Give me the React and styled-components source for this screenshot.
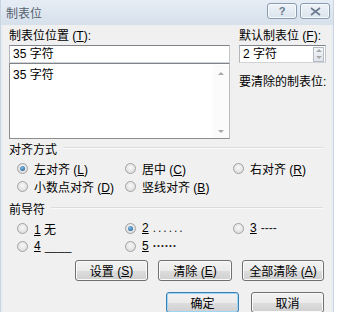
import React from "react";
import styled, { createGlobalStyle } from "styled-components";

const GlobalStyle = createGlobalStyle`
  html, body {
    margin: 0;
    padding: 0;
    background: #ffffff;
  }
  body {
    font-family: "Liberation Sans", "Noto Sans CJK SC", sans-serif;
    font-size: 12px;
    color: #000;
  }
`;

const Window = styled.div`
  width: 334px;
  height: 312px;
  box-sizing: border-box;
  background: #f0f0f0;
  border-left: 1px solid #c9d4e0;
  border-right: 1px solid #c9d4e0;
  display: flex;
  flex-direction: column;
  overflow: hidden;
`;

const TitleBar = styled.div`
  height: 25px;
  flex: none;
  display: flex;
  align-items: center;
  justify-content: space-between;
  padding: 0 3px 0 5px;
  background: linear-gradient(to bottom, #e6edf5, #d6e0eb);
`;

const Title = styled.span`
  color: #55616e;
  font-size: 12px;
`;

const TitleButtons = styled.div`
  display: flex;
  gap: 3px;
  margin-top: -3px;
`;

const CaptionButton = styled.div`
  width: ${p => p.$w}px;
  height: 16px;
  box-sizing: border-box;
  border: 1px solid #8a9bb0;
  border-radius: 3px;
  background: linear-gradient(to bottom, #eef3f8, #dbe4ee);
  box-shadow: inset 0 0 0 1px #f7fafc;
  display: flex;
  align-items: center;
  justify-content: center;
  color: #6b7a8c;
  font-size: 11px;
  font-weight: bold;
`;

const Body = styled.div`
  flex: 1;
  display: flex;
  flex-direction: column;
  padding: 3px 6px 0 6px;
  border-left: 2px solid #e9eef4;
  border-right: 2px solid #e9eef4;
`;

const Top = styled.div`
  display: grid;
  grid-template-columns: 221px 1fr;
  column-gap: 9px;
`;

const Column = styled.div`
  display: flex;
  flex-direction: column;
`;

const Label = styled.div`
  height: 16px;
  line-height: 16px;
  white-space: nowrap;
  margin-top: ${p => p.$mt || 0}px;
`;

const Input = styled.div`
  height: 18px;
  box-sizing: border-box;
  background: #fff;
  border: 1px solid #8c8e92;
  border-color: #7f8288 #c2c5ca #d0d3d7 #b3b6bb;
  padding-left: 3px;
  line-height: 16px;
  margin-top: 1px;
  display: flex;
  align-items: center;
  justify-content: space-between;
`;

const ListBox = styled.div`
  height: 76px;
  box-sizing: border-box;
  background: #fff;
  border: 1px solid #8c8e92;
  border-color: #7f8288 #b9bcc1 #8c8e92 #8c8e92;
  padding: 1px 0 0 3px;
  display: flex;
  justify-content: space-between;
`;

const ScrollBar = styled.div`
  width: 16px;
  display: flex;
  flex-direction: column;
  justify-content: space-between;
  align-items: center;
  padding: 7px 0 5px;
  background: #fbfbfb;
`;

const Arrow = styled.span`
  width: 0;
  height: 0;
  border-left: 3px solid transparent;
  border-right: 3px solid transparent;
  ${p => (p.$down ? "border-top: 3px solid #a8a8a8;" : "border-bottom: 3px solid #a8a8a8;")}
`;

const Spin = styled.div`
  width: 11px;
  height: 15px;
  margin-right: 1px;
  box-sizing: border-box;
  border: 1px solid #b5bcc6;
  background: linear-gradient(to bottom, #f4f6f9, #dfe5ec);
  display: flex;
  flex-direction: column;
  justify-content: space-around;
  align-items: center;
`;

const GroupHeader = styled.div`
  display: flex;
  align-items: center;
  gap: 6px;
  height: 16px;
  margin-top: ${p => p.$mt}px;
  margin-right: 2px;
  &::after {
    content: "";
    flex: 1;
    height: 1px;
    background: #dcdcdc;
    border-bottom: 1px solid #fafafa;
  }
`;

const OptionGrid = styled.div`
  display: grid;
  grid-template-columns: 108px 108px 1fr;
  grid-auto-rows: 18px;
  padding-left: 8px;
  margin-top: 3px;
`;

const Option = styled.div`
  display: flex;
  align-items: center;
  gap: 6px;
  white-space: nowrap;
`;

const Radio = styled.span`
  width: 11px;
  height: 11px;
  flex: none;
  border-radius: 50%;
  box-sizing: border-box;
  border: 1px solid #a2a2a2;
  background: radial-gradient(circle at 50% 40%, #f8f8f8, #d6d6d6);
  display: flex;
  align-items: center;
  justify-content: center;
  &::after {
    content: "";
    width: 5px;
    height: 5px;
    border-radius: 50%;
    background: ${p => (p.$on ? "radial-gradient(circle at 40% 35%, #7fc0ee, #1a4f7f)" : "transparent")};
  }
`;

const Key = styled.u`
  text-underline-offset: 1px;
`;

const Leader = styled.span`
  color: #222;
  letter-spacing: ${p => p.$ls || 0}px;
  font-weight: ${p => (p.$bold ? "bold" : "normal")};
  margin-left: 4px;
`;

const ButtonRow = styled.div`
  display: flex;
  justify-content: flex-end;
  gap: ${p => p.$gap}px;
  margin-top: ${p => p.$mt}px;
  margin-right: 1px;
`;

const Button = styled.div`
  width: ${p => p.$w}px;
  height: 21px;
  box-sizing: border-box;
  border: 1px solid ${p => (p.$default ? "#3c7fb1" : "#707070")};
  border-radius: 3px;
  background: linear-gradient(to bottom, #f2f2f2 0%, #ebebeb 50%, #dddddd 51%, #cfcfcf 100%);
  box-shadow: inset 0 0 0 1px ${p => (p.$default ? "#9fd5f5" : "#fbfbfb")};
  display: flex;
  align-items: center;
  justify-content: center;
  white-space: nowrap;
`;

function AccessLabel({ text, k }) {
  return (
    <>
      {text} (<Key>{k}</Key>)
    </>
  );
}

export default function App() {
  const align = [
    { text: "左对齐", k: "L", on: true },
    { text: "居中", k: "C" },
    { text: "右对齐", k: "R" },
    { text: "小数点对齐", k: "D" },
    { text: "竖线对齐", k: "B" },
  ];

  return (
    <>
      <GlobalStyle />
      <Window>
        <TitleBar>
          <Title>制表位</Title>
          <TitleButtons>
            <CaptionButton $w={30}>?</CaptionButton>
            <CaptionButton $w={30}>
              <svg width="11" height="9" viewBox="0 0 11 9">
                <path d="M1 1 L10 8 M10 1 L1 8" stroke="#6b7a8c" strokeWidth="1.6" fill="none" />
              </svg>
            </CaptionButton>
          </TitleButtons>
        </TitleBar>
        <Body>
          <Top>
            <Column>
              <Label><AccessLabel text="制表位位置" k="T" />:</Label>
              <Input>35 字符</Input>
              <ListBox>
                <span>35 字符</span>
                <ScrollBar>
                  <Arrow />
                  <Arrow $down />
                </ScrollBar>
              </ListBox>
            </Column>
            <Column>
              <Label><AccessLabel text="默认制表位" k="F" />:</Label>
              <Input>
                2 字符
                <Spin>
                  <Arrow />
                  <Arrow $down />
                </Spin>
              </Input>
              <Label $mt={11}>要清除的制表位:</Label>
            </Column>
          </Top>

          <GroupHeader $mt={1}>对齐方式</GroupHeader>
          <OptionGrid>
            {align.map(a => (
              <Option key={a.k}>
                <Radio $on={a.on} />
                <span><AccessLabel text={a.text} k={a.k} /></span>
              </Option>
            ))}
          </OptionGrid>

          <GroupHeader $mt={5}>前导符</GroupHeader>
          <OptionGrid>
            <Option><Radio /><span><Key>1</Key> 无</span></Option>
            <Option><Radio $on /><span><Key>2</Key><Leader $ls={2}>......</Leader></span></Option>
            <Option><Radio /><span><Key>3</Key><Leader $ls={0}>----</Leader></span></Option>
            <Option><Radio /><span><Key>4</Key><Leader>____</Leader></span></Option>
            <Option><Radio /><span><Key>5</Key><Leader $bold>······</Leader></span></Option>
          </OptionGrid>

          <ButtonRow $gap={10} $mt={5}>
            <Button $w={73}><AccessLabel text="设置" k="S" /></Button>
            <Button $w={74}><AccessLabel text="清除" k="E" /></Button>
            <Button $w={82}><AccessLabel text="全部清除" k="A" /></Button>
          </ButtonRow>
          <ButtonRow $gap={12} $mt={11}>
            <Button $w={73} $default>确定</Button>
            <Button $w={73}>取消</Button>
          </ButtonRow>
        </Body>
      </Window>
    </>
  );
}
